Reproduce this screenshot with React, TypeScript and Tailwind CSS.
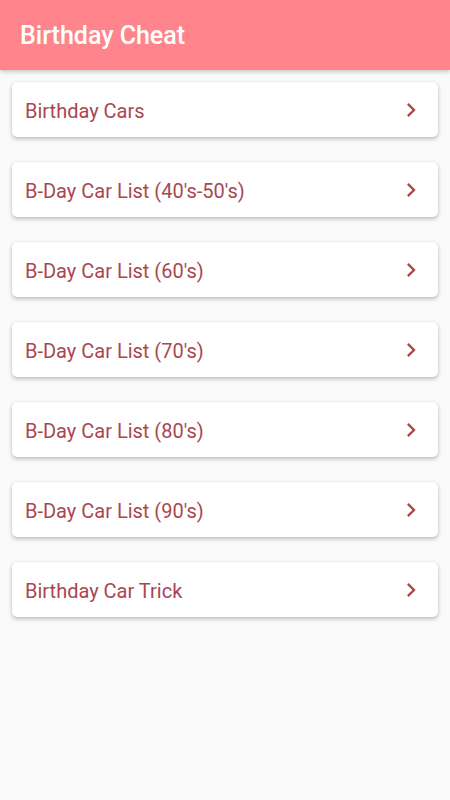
import React from "react";

const items = [
  "Birthday Cars",
  "B-Day Car List (40's-50's)",
  "B-Day Car List (60's)",
  "B-Day Car List (70's)",
  "B-Day Car List (80's)",
  "B-Day Car List (90's)",
  "Birthday Car Trick",
];

function Chevron() {
  return (
    <svg width="28" height="28" viewBox="0 0 24 24" className="shrink-0">
      <path d="M10 6L8.59 7.41 13.17 12l-4.58 4.59L10 18l6-6z" fill="#a8474f" />
    </svg>
  );
}

export default function App() {
  return (
    <div className="min-h-[800px] w-[450px] bg-[#fafafa]" style={{ fontFamily: "Roboto, 'Noto Sans', sans-serif" }}>
      <div className="flex h-[70px] items-center bg-[#ff848b] px-5 shadow-[0_2px_4px_rgba(0,0,0,0.2)]">
        <span className="pt-[2px] text-[25px] font-medium text-white">Birthday Cheat</span>
      </div>
      <div className="flex flex-col gap-[25px] px-3 pt-3">
        {items.map((t) => (
          <div
            key={t}
            className="flex h-[55px] items-center justify-between rounded-[5px] bg-white pl-[13px] pr-[13px] shadow-[0_2px_4px_rgba(0,0,0,0.25),0_0_1px_rgba(0,0,0,0.15)]"
          >
            <span className="pt-[3px] text-[20px] text-[#a8474f]">{t}</span>
            <Chevron />
          </div>
        ))}
      </div>
    </div>
  );
}
